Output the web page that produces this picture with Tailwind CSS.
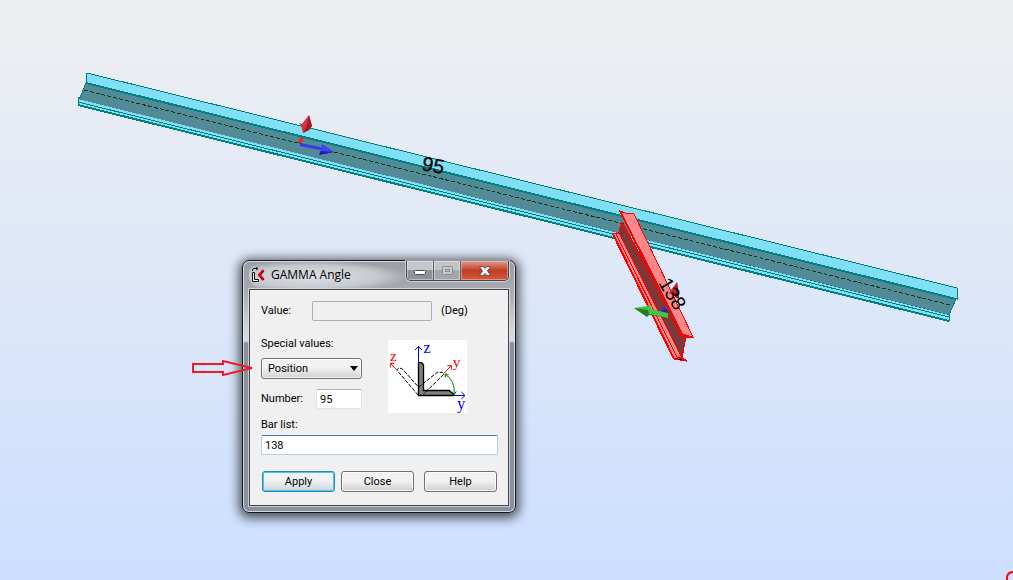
<!DOCTYPE html>
<html lang="en">
<head>
  <meta charset="UTF-8">
  <meta name="viewport" content="width=device-width, initial-scale=1.0">
  <title>GAMMA Angle</title>
  <script src="https://cdn.jsdelivr.net/npm/@tailwindcss/browser@4"></script>
</head>
<body class="relative min-h-screen overflow-hidden bg-linear-to-b from-[#eeeff1] to-[#ccdfff] font-['Roboto',sans-serif] text-[11px] leading-4 text-black">

  <!-- 3D view -->
  <svg class="absolute inset-0 h-full w-full" aria-label="Model view">
    <!-- Bar 95 -->
    <g shape-rendering="crispEdges" stroke="#008080">
      <path d="M87 73L957 288V299L86 83Z" fill="#80dff4"/>
      <path d="M86 83L956 299L949 315L79 100Z" fill="#528b97"/>
      <path d="M78 97V99L949 315V321L78 105Z" fill="#80dff4" stroke="none"/>
      <path d="M86 83L956 299M78 105L949 321" stroke-width="2"/>
      <path d="M78 97V105M949 313V321M78 102L949 317"/>
      <path d="M84 90L950 305" stroke="#004000" stroke-dasharray="4 2"/>
    </g>
    <!-- Local axes of bar 95 -->
    <path d="M299 123l4 1-1 3z" fill="#30a030"/>
    <path d="M300 137l4 1-3 6-3-1z" fill="#e02830"/>
    <path d="M309 115l3 11-3 4-6 3-2-8z" fill="#e0303c"/>
    <path d="M309 115l-2 10-4 8 6-3 3-4z" fill="#a01c28"/>
    <path d="M300 143l20 4v3l-20-4z" fill="#3a3ae8"/>
    <path d="M322 144l12 8-15 3z" fill="#4040ff"/>
    <path d="M334 152l-15 3 2-4z" fill="#2020a0"/>
    <text x="421" y="170" transform="rotate(11 421 170)" class="font-['Liberation_Sans',sans-serif] text-[20px]" stroke="#000" stroke-width=".3">95</text>

    <!-- Bar 138 -->
    <g shape-rendering="crispEdges" stroke="#ff0000">
      <path d="M622 222L618 235L682 358L686 337Z" fill="#743c3c"/>
      <path d="M613 234L619 233L682 358L687 361L674 359Z" fill="#ff8888"/>
      <path d="M620 211L625 213L634 214L693 337L682 334Z" fill="#ff8888"/>
      <path d="M620 211L682 334M613 234L674 359" stroke-width="2"/>
      <path d="M616 234L678 359M621 224L684 343M686 337L684 347L681 358"/>
      <path d="M680 334L686 337L693 337M674 359L681 358L687 361" stroke-width="2"/>
    </g>
    <!-- Local axes of bar 138 -->
    <path d="M677 282l2 17-10-6z" fill="#d02030"/>
    <path d="M677 282l2 17-4-2z" fill="#901820"/>
    <path d="M664 306l3 5-7 1z" fill="#3030ff"/>
    <path d="M666 309l2 3-2 4-4-5z" fill="#2020a0"/>
    <path d="M634 308l19-3-3 4 18 4v5l-19-4-2 2z" fill="#44c444"/>
    <path d="M634 308l14 2 1 4 19 4-19-3-2 2z" fill="#208020"/>
    <text x="658" y="283" transform="rotate(59 658 283)" class="font-['Liberation_Sans',sans-serif] text-[20px]">138</text>
    <!-- Markup in the corner -->
    <svg x="100%" y="100%" overflow="visible">
      <path d="M-6 1v-3q0-6 7-6" fill="none" stroke="#ff0000" stroke-width="2"/>
    </svg>
  </svg>

  <!-- Dialog window -->
  <main class="absolute top-[260px] left-[242px] w-[274px] rounded-[7px] border border-[#15171b] bg-[linear-gradient(to_bottom,#9b9fa5_0px,#a7aaaf_30px,#cfd2d5_65px,#d8dbde_80px,#8b919c_82px,#8b919c_100%)] px-1.5 pb-1.5 shadow-[inset_0_0_0_1px_rgba(235,240,245,0.75),0_2px_11px_3px_rgba(0,0,0,0.65)]">
    <header class="flex h-7 items-start">
      <div class="flex h-7 grow items-center gap-1.5 rounded-full bg-[radial-gradient(ellipse_at_40%_55%,rgba(225,228,232,0.95)_0%,rgba(210,214,219,0.75)_50%,transparent_72%)] pl-0.5">
        <svg class="h-4 w-3.5" viewBox="0 0 14 16" fill="none">
          <path d="M1.500 5.500h2v7h4v2h-6z" fill="#fff" stroke="#111"/>
          <path d="M1.500 4V2.500L3 1.500h3.500M5 0l2 1.500L5 3" stroke="#111"/>
          <path d="M12.500 3.500L8.500 8l4 5" stroke="#300" stroke-width="2.500"/>
          <path d="M12.500 3L8 7.500l4.500 5" stroke="#f00018" stroke-width="2"/>
        </svg>
        <h1 class="font-['Open_Sans',sans-serif] text-[12px] whitespace-nowrap">GAMMA Angle</h1>
      </div>
      <div class="flex h-5 overflow-hidden rounded-b-[5px] border border-t-0 border-[#43474e] shadow-[0_0_0_1px_rgba(235,240,245,0.6)]">
        <button aria-label="Minimize" class="flex w-[27px] items-center justify-center border-r border-[#565a61] bg-linear-to-b from-[#c3c6ca] from-45% to-[#8d9198] to-50% shadow-[inset_0_0_0_1px_rgba(255,255,255,0.4)]">
          <svg class="mt-1 h-[5px] w-3" viewBox="0 0 12 5"><rect x=".5" y=".5" width="11" height="4" rx="1" fill="#fff" stroke="#4a4f5a"/></svg>
        </button>
        <button aria-label="Maximize" disabled class="flex w-[27px] items-center justify-center border-r border-[#565a61] bg-linear-to-b from-[#c0c3c7] from-45% to-[#a3a6ab] to-50% shadow-[inset_0_0_0_1px_rgba(255,255,255,0.4)]">
          <svg class="h-[9px] w-[11px]" viewBox="0 0 11 9" fill="#c9cccf" stroke="#858990"><rect x=".5" y=".5" width="10" height="8" rx="1"/><rect x="3.500" y="3.500" width="4" height="2"/></svg>
        </button>
        <button aria-label="Close window" class="flex w-[47px] items-center justify-center bg-linear-to-b from-[#dc9a8c] via-[#bf3c24] via-50% to-[#d45c3c] shadow-[inset_0_0_0_1px_rgba(255,200,190,0.5)]">
          <svg class="h-2.5 w-3" viewBox="0 0 12 10"><path d="M.5.5h3.500l2 2 2-2h3.500L8.500 5l3 4.500H8l-2-2-2 2H.5l3-4.500z" fill="#fff" stroke="#4a4048" stroke-width=".8"/></svg>
        </button>
      </div>
    </header>

    <form class="border border-[#42464c] bg-[#f0f0f0] pt-[11px] pr-2.5 pb-[13px] pl-[11px] shadow-[0_0_0_1px_rgba(225,230,235,0.7)]" onsubmit="return false">
      <div class="flex items-center">
        <label for="value" class="w-[51px]">Value:</label>
        <input id="value" type="text" disabled class="h-5 w-[120px] rounded-xs border border-[#afafaf] bg-[#f0f0f0] px-1">
        <span class="ml-[9px]">(Deg)</span>
      </div>

      <div class="mt-[15px] flex justify-between pr-[31px]">
        <div class="w-[101px]">
          <label for="special" class="block">Special values:</label>
          <div class="relative mt-1.5">
            <select id="special" class="h-[21px] w-full appearance-none rounded-[3px] border border-[#707070] bg-linear-to-b from-[#f2f2f2] from-45% to-[#d2d2d2] pl-1.5 shadow-[inset_0_0_0_1px_rgba(255,255,255,0.7)]">
              <option>Position</option>
            </select>
            <svg class="pointer-events-none absolute top-2 right-1 h-[5px] w-2" viewBox="0 0 8 5"><path d="M0 0h8L4 5z"/></svg>
          </div>
          <div class="mt-2.5 flex items-center justify-between">
            <label for="number">Number:</label>
            <input id="number" type="text" value="95" class="h-5 w-[46px] rounded-xs border border-[#e2e3ea] border-t-[#abadb3] bg-white px-[3px]">
          </div>
        </div>

        <!-- Angle diagram -->
        <svg class="mt-1 h-[73px] w-[79px] overflow-visible bg-white font-['Liberation_Serif',serif]" viewBox="24 15 237 219" fill="none" stroke-width="3" aria-label="Gamma angle diagram">
          <g stroke="#0000ff">
            <path d="M115.500 182V34M105 45l10.500-11L126 45"/>
            <path d="M115 181.500H254M244 171l11 10.500L244 192"/>
          </g>
          <path d="M115.500 83H125l5.500 7v76.500H208l6 6 5 3 1 6H115.500z" fill="#808080" stroke="#000" stroke-width="4"/>
          <g stroke="#000" stroke-dasharray="12 4">
            <path d="M115 181L50 105l5-5h9l6 5 46 52"/>
            <path d="M115 157l57-45h15l5 5-62 61"/>
          </g>
          <g stroke="#ff0000">
            <path d="M50 104L31 85M31 97V85h12"/>
            <path d="M192 115l22-23M202 92h12v12"/>
          </g>
          <path d="M195 117q31 20 28 62M196 128l-1-11 11 2M216 170l7 9 6-10" stroke="#008000"/>
          <g stroke="none" font-size="46">
            <text x="130" y="53" font-size="50" fill="#0000ff">z</text>
            <text x="30" y="79" fill="#ff0000">z</text>
            <text x="218" y="97" fill="#ff0000">y</text>
            <text x="231" y="221" fill="#0000ff" font-size="50">y</text>
          </g>
        </svg>
      </div>

      <div class="mt-1">
        <label for="bars" class="block">Bar list:</label>
        <input id="bars" type="text" value="138" class="mt-0.5 h-5 w-full rounded-xs border border-[#b5cfe7] border-t-[#3d7bad] bg-white px-[3px]">
      </div>

      <div class="mt-4 flex pl-px">
        <button class="h-[21px] w-[73px] rounded-[3px] border border-[#3c7fb1] bg-linear-to-b from-[#f0f2f3] from-45% to-[#ccd5da] shadow-[inset_0_0_0_1px_#37cdf5]">Apply</button>
        <button class="ml-1.5 h-[21px] w-[73px] rounded-[3px] border border-[#707070] bg-linear-to-b from-[#f2f2f2] from-45% to-[#cfcfcf] shadow-[inset_0_0_0_1px_rgba(255,255,255,0.8)]">Close</button>
        <button class="ml-2.5 h-[21px] w-[73px] rounded-[3px] border border-[#707070] bg-linear-to-b from-[#f2f2f2] from-45% to-[#cfcfcf] shadow-[inset_0_0_0_1px_rgba(255,255,255,0.8)]">Help</button>
      </div>
    </form>
  </main>

  <!-- Arrow that points at the drop-down -->
  <svg class="pointer-events-none absolute top-[359px] left-[191px] h-[18px] w-16" viewBox="0 0 64 18" fill="none" stroke="#ed1c24" stroke-width="2">
    <path d="M2 5h30V2l29 7-29 7v-3H2z"/>
  </svg>
</body>
</html>
